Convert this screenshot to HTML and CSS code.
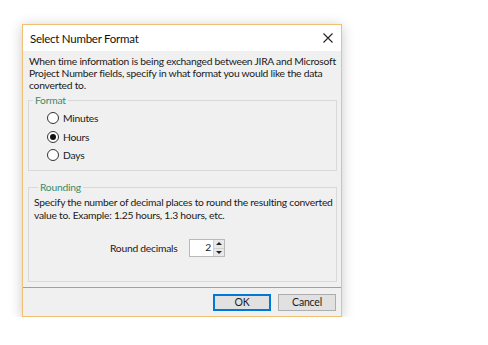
FILE: index.html
```html
<!DOCTYPE html>
<html lang="en">
<head>
  <meta charset="UTF-8" />
  <title>Select Number Format</title>
  <link rel="stylesheet" href="styles.css">
</head>
<body>
  <div class="dialog">
    <div class="titlebar">
      <span class="title">Select Number Format</span>
      <svg class="close" width="10" height="10" viewBox="0 0 10 10">
        <path d="M0.5 0.5 L9.5 9.5 M9.5 0.5 L0.5 9.5" stroke="#222" stroke-width="1.1" fill="none" />
      </svg>
    </div>

    <div class="content">
      <p class="desc">When time information is being exchanged between JIRA and Microsoft<br>Project Number fields, specify in what format you would like the data<br>converted to.</p>

      <fieldset class="group group-format">
        <legend>Format</legend>
        <div class="radios">
          <label class="radio"><span class="dot"></span>Minutes</label>
          <label class="radio checked"><span class="dot"></span>Hours</label>
          <label class="radio"><span class="dot"></span>Days</label>
        </div>
      </fieldset>

      <fieldset class="group group-round">
        <legend>Rounding</legend>
        <p class="note">Specify the number of decimal places to round the resulting converted<br>value to. Example: 1.25 hours, 1.3 hours, etc.</p>
        <div class="round-row">
          <span class="round-label">Round decimals</span>
          <div class="spinner">
            <span class="value">2</span>
            <div class="arrows">
              <span class="arrow up"></span>
              <span class="arrow down"></span>
            </div>
          </div>
        </div>
      </fieldset>
    </div>

    <div class="footer">
      <button class="btn btn-ok">OK</button>
      <button class="btn">Cancel</button>
    </div>
  </div>
</body>
</html>
```

FILE: styles.css
```css
* {
  box-sizing: border-box;
  margin: 0;
  padding: 0;
}

body {
  background: #fff;
  font-family: Lato, 'Noto Sans', sans-serif;
  font-size: 10.3px;
  letter-spacing: -0.25px;
  color: #1a1a1a;
}

.dialog {
  width: 320px;
  margin: 24px 0 0 22px;
  border: 1px solid #f3bf72;
  background: #f0f0f0;
  box-shadow: 0 2px 12px rgba(0, 0, 0, 0.22);
}

.titlebar {
  height: 26px;
  background: #fff;
  display: flex;
  align-items: center;
  justify-content: space-between;
  padding: 0 8px 0 7px;
}

.title {
  font-size: 11.5px;
  color: #111;
}

.content {
  padding: 4px 4px 5px 5px;
}

.desc {
  line-height: 12px;
  padding-left: 1px;
  white-space: nowrap;
}

.group {
  border: 1px solid #d9d9d9;
  margin-top: 3px;
  padding: 0;
  min-width: 0;
}

.group legend {
  color: #3b8a6b;
  padding: 0 2px;
  margin-left: 4px;
  line-height: 12px;
}

.group-format {
  height: 77px;
}

.radios {
  padding: 3px 0 0 18px;
}

.radio {
  display: flex;
  align-items: center;
  height: 18.5px;
  gap: 4px;
}

.dot {
  width: 12px;
  height: 12px;
  border: 1px solid #333;
  border-radius: 50%;
  background: #fff;
  display: flex;
  align-items: center;
  justify-content: center;
}

.checked .dot::after {
  content: '';
  width: 6px;
  height: 6px;
  border-radius: 50%;
  background: #111;
}

.group-round {
  height: 101px;
  margin-top: 10px;
  padding: 3px 6px 0 5px;
}

.note {
  line-height: 13px;
  white-space: nowrap;
}

.round-row {
  display: flex;
  align-items: center;
  margin-top: 17px;
  padding-left: 76px;
}

.round-label {
  width: 79px;
  white-space: nowrap;
}

.spinner {
  width: 36px;
  height: 18px;
  border: 1px solid #b9b9b9;
  background: #fff;
  display: flex;
}

.spinner .value {
  flex: 1;
  text-align: right;
  padding-right: 2px;
  line-height: 15px;
}

.arrows {
  width: 11px;
  display: flex;
  flex-direction: column;
  border-left: 1px solid #d0d0d0;
}

.arrow {
  flex: 1;
  background: #e8e8e8;
  display: flex;
  align-items: center;
  justify-content: center;
}

.arrow.up {
  border-bottom: 1px solid #cfcfcf;
}

.arrow::after {
  content: '';
  border-left: 3px solid transparent;
  border-right: 3px solid transparent;
}

.arrow.up::after {
  border-bottom: 3px solid #222;
}

.arrow.down::after {
  border-top: 3px solid #222;
}

.footer {
  border-top: 1px solid #a0a0a0;
  display: flex;
  justify-content: flex-end;
  gap: 7px;
  padding: 6px 5px 5px 0;
}

.btn {
  width: 58px;
  height: 17px;
  border: 1px solid #adadad;
  background: #e1e1e1;
  font-family: inherit;
  font-size: 10.5px;
  letter-spacing: -0.2px;
  color: #1a1a1a;
  line-height: 13px;
}

.btn-ok {
  border: 1px solid #0078d7;
  box-shadow: inset 0 0 0 1px #0078d7;
}
```
